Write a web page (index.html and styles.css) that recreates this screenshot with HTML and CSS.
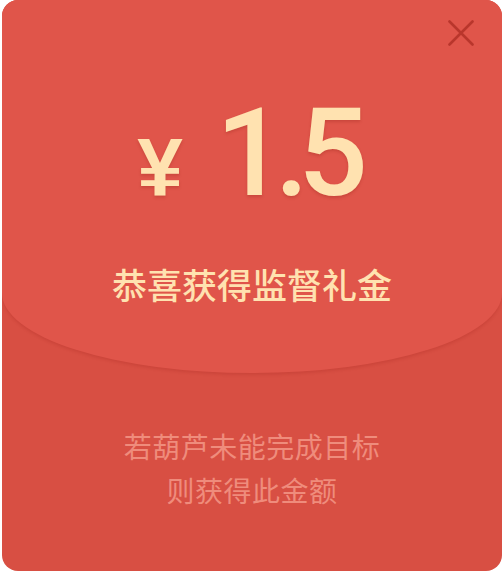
FILE: index.html
```html
<!DOCTYPE html>
<html lang="zh-CN">
<head>
<meta charset="utf-8">
<link rel="stylesheet" href="styles.css">
</head>
<body>
<div class="page">
  <div class="card">
    <button class="close" aria-label="关闭">
      <svg width="26" height="26" viewBox="0 0 26 26"><path d="M1.5 1.5L24.5 24.5M24.5 1.5L1.5 24.5" stroke="#b9362c" stroke-width="2.6" stroke-linecap="round" fill="none"/></svg>
    </button>
    <div class="top">
      <div class="amount">
        <span class="yen">¥</span>
        <span class="num">1.5</span>
      </div>
      <div class="title">恭喜获得监督礼金</div>
    </div>
    <div class="bottom">
      <p class="note">若葫芦未能完成目标</p>
      <p class="note">则获得此金额</p>
    </div>
  </div>
</div>
</body>
</html>
```

FILE: styles.css
```css
html, body {
  margin: 0;
  padding: 0;
  background: #ffffff;
}
.page {
  padding: 0 2px 0 2px;
  display: flex;
}
.card {
  position: relative;
  width: 500px;
  height: 571px;
  border-radius: 16px;
  background: #d84f43;
  overflow: hidden;
  display: flex;
  flex-direction: column;
}
.close {
  position: absolute;
  z-index: 5;
  top: 18px;
  left: 444px;
  width: 30px;
  height: 30px;
  padding: 2px;
  border: 0;
  background: transparent;
  display: flex;
}
.top {
  height: 373px;
  box-sizing: border-box;
  background: #e0554a;
  border-radius: 0 0 50% 50% / 0 0 80px 80px;
  box-shadow: 0 2px 3px rgba(150, 30, 20, 0.18);
  display: flex;
  flex-direction: column;
  align-items: center;
  padding-top: 92px;
  position: relative;
  z-index: 1;
}
.amount {
  display: flex;
  align-items: baseline;
  gap: 33px;
  color: #ffe2b0;
  font-family: Roboto, "Liberation Sans", Arial, sans-serif;
  text-shadow: 0 2px 3px rgba(140, 30, 20, 0.25);
  line-height: 122px;
  height: 122px;
  margin-left: -10px;
}
.yen {
  font-size: 82px;
  font-weight: 700;
  font-family: "Liberation Sans", Arial, sans-serif;
}
.num {
  font-size: 123px;
  letter-spacing: -11px;
  font-weight: 500;
}
.title {
  margin-top: 50px;
  font-family: "Noto Sans CJK SC", "Noto Sans", sans-serif;
  font-size: 35px;
  line-height: 40px;
  font-weight: 500;
  color: #ffe2b0;
}
.bottom {
  padding-top: 51px;
  display: flex;
  flex-direction: column;
  align-items: center;
}
.note {
  margin: 0;
  font-family: "Noto Sans CJK SC", "Noto Sans", sans-serif;
  font-size: 28px;
  letter-spacing: 0.5px;
  line-height: 44px;
  color: #ef8c7c;
}
```
